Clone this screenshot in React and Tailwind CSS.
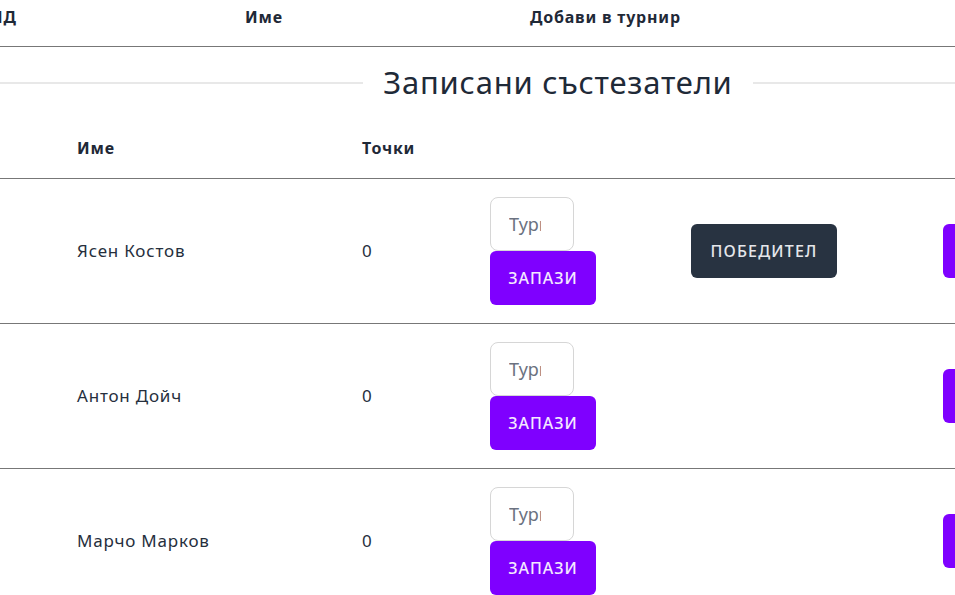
const players = [
  { name: 'Ясен Костов', points: 0, winner: true },
  { name: 'Антон Дойч', points: 0, winner: false },
  { name: 'Марчо Марков', points: 0, winner: false },
];

function PlayerRow({ player }) {
  return (
    <div className="grid h-[145px] grid-cols-[77px_285px_128px_201px_252px_1fr] items-center border-b border-[#777777] text-[17px] tracking-[0.8px] text-[#262f3d]">
      <div />
      <div>{player.name}</div>
      <div>{player.points}</div>
      <div className="flex flex-col">
        <input
          type="text"
          placeholder="Турнир"
          className="h-[54px] w-[84px] rounded-lg border border-[#d6d6d6] bg-white pl-[18px] pr-[32px] text-[18px] tracking-normal text-[#374151] placeholder:text-[#6b7280] outline-none"
        />
        <button className="h-[54px] w-[106px] rounded-md bg-[#7f00ff] text-[16px] font-medium uppercase tracking-[1px] text-[#f3e8ff]">
          Запази
        </button>
      </div>
      <div>
        {player.winner && (
          <button className="h-[54px] w-[146px] rounded-md bg-[#283341] text-[16px] font-medium uppercase tracking-[1.2px] text-[#e5e7eb]">
            Победител
          </button>
        )}
      </div>
      <div>
        <button className="h-[54px] w-[110px] rounded-md bg-[#7f00ff] text-[16px] font-medium uppercase tracking-[1px] text-white">
          Изтрий
        </button>
      </div>
    </div>
  );
}

export default function App() {
  return (
    <div
      className="h-[595px] w-[955px] overflow-hidden bg-white"
      style={{ fontFamily: '"Noto Sans", "DejaVu Sans", sans-serif' }}
    >
      <div className="w-[1116px]">
        {/* All tournaments table header */}
        <div className="-ml-[10px] grid h-[47px] grid-cols-[255px_285px_1fr] border-b border-[#777777] pt-[5px] text-[16px] font-bold tracking-[0.8px] text-[#1f2937]">
          <div>ИД</div>
          <div>Име</div>
          <div>Добави в турнир</div>
        </div>

        {/* Section divider */}
        <div className="flex h-[71px] items-center">
          <div className="h-[2px] flex-1 bg-[#e8e8e8]" />
          <h2 className="px-5 text-[31px] tracking-wide text-[#1f2a38]">Записани състезатели</h2>
          <div className="h-[2px] flex-1 bg-[#e8e8e8]" />
        </div>

        {/* Registered players table */}
        <div className="grid h-[61px] grid-cols-[77px_285px_1fr] items-center border-b border-[#777777] text-[16px] font-bold tracking-[0.8px] text-[#1f2937]">
          <div />
          <div>Име</div>
          <div>Точки</div>
        </div>
        {players.map((p) => (
          <PlayerRow key={p.name} player={p} />
        ))}
      </div>
    </div>
  );
}
